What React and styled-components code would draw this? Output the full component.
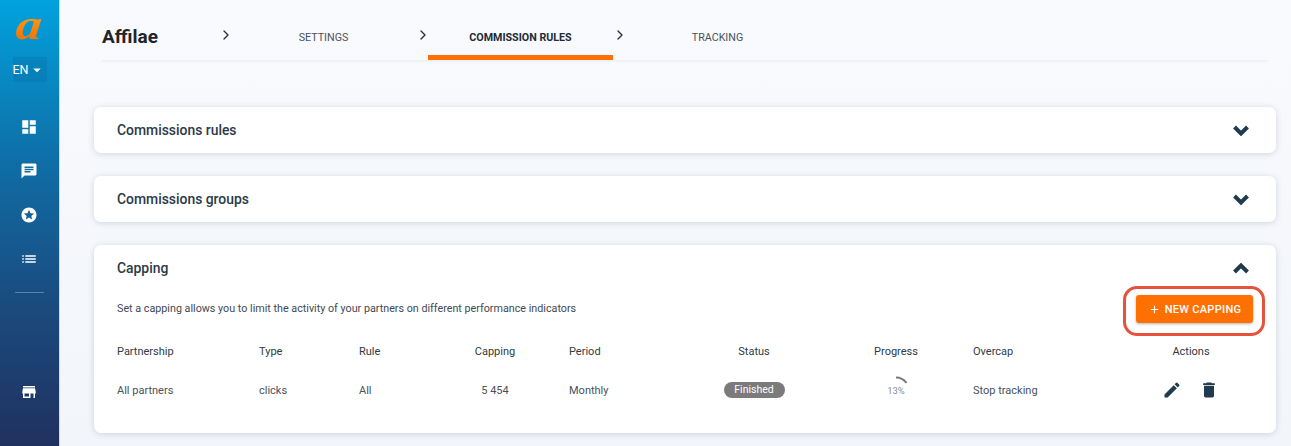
import React from "react";
import styled, { createGlobalStyle } from "styled-components";
import { MdDashboard, MdChat, MdStars, MdStore, MdEdit, MdDelete, MdAdd, MdArrowDropDown, MdList } from "react-icons/md";
import { ChevronRight } from "lucide-react";

const Global = createGlobalStyle`
  html, body { margin: 0; padding: 0; height: 100%; }
  body { font-family: Roboto, "Liberation Sans", sans-serif; background: #f5f7fc; overflow: hidden; }
  * { box-sizing: border-box; }
`;
const Page = styled.div`display: flex; width: 1291px; height: 446px; overflow: hidden; background: linear-gradient(180deg, #f9fafd 0%, #f2f5fa 100%);`;
const Sidebar = styled.aside`
  flex: 0 0 60px; height: 446px; display: flex; flex-direction: column; align-items: center;
  background: linear-gradient(180deg, #01a2de 0%, #0f6ea6 36%, #1a4b7f 68%, #20315f 100%);
  border-right: 1px solid #c8dcea; padding: 10px 1px 0 0; color: #fff;
`;
const Logo = styled.div`
  height: 32px; width: 40px; text-align: center; font: italic bold 43px/30px "Liberation Serif", serif;
  background: linear-gradient(180deg, #ffa31a, #f07000); -webkit-background-clip: text; background-clip: text; color: transparent;
  transform: scaleX(1.2) skewX(-5deg);
`;
const Lang = styled.div`
  margin: 15px 0 0 1px; width: 34px; height: 25px; display: flex; align-items: center;
  background: rgba(0,60,110,.12); font-size: 12.5px; white-space: nowrap;
  svg { margin-left: -1px; flex: none; }
`;
const SideIcons = styled.nav`display: flex; flex-direction: column; align-items: center; gap: 26px; margin-top: 36px;`;
const Divider = styled.div`width: 29px; height: 1px; background: rgba(255,255,255,.3); margin-top: 24px;`;
const StoreSlot = styled.div`margin-top: 90px; line-height: 0;`;
const Main = styled.main`flex: 1; min-width: 0; padding: 0 15px 0 34px;`;
const Header = styled.header`
  margin: 0 8px; height: 62px; display: flex; align-items: flex-start; border-bottom: 2px solid #eff2f6;
`;
const Brand = styled.div`flex: 0 0 117px; font-size: 19px; font-weight: 700; color: #212529; padding-top: 27px; line-height: 20px;`;
const Arrow = styled.div`flex: 0 0 12px; min-width: 0; display: flex; justify-content: center; padding: 27px 0 0 1px; color: #2b2f36; svg { flex: none; }`;
const Tab = styled.div`
  flex: 0 0 185px; height: 60px; text-align: center; padding-top: 31px; line-height: 14px; font-size: 10.7px;
  font-weight: ${p => p.$active ? 700 : 400}; color: ${p => p.$active ? "#212b36" : "#4a525e"};
  border-bottom: 5px solid ${p => p.$active ? "#ff7105" : "transparent"};
`;
const Stack = styled.div`display: flex; flex-direction: column; gap: 23px; margin-top: 45px;`;
const Card = styled.section`background: #fff; border-radius: 7px; box-shadow: 0 1px 6px rgba(60,75,100,.2); padding-bottom: ${p => p.$open ? 19 : 0}px;`;
const CardHead = styled.div`
  height: 46px; display: flex; align-items: center; justify-content: space-between; padding: 0 27px 0 23px;
  font-size: 13.9px; font-weight: 500; color: #2c3a47;
`;
const Chevron = styled.svg`width: 16px; height: 11px; fill: none; stroke: #1f3b4d; stroke-width: 4; transform: ${p => p.$up ? "scaleY(-1)" : "none"};`;
const Intro = styled.div`
  display: flex; align-items: center; justify-content: space-between; padding: 0 11px 0 23px; height: 50px; margin-top: -5px;
  font-size: 10.75px; color: #3f4a55;
`;
const IntroText = styled.span`margin-top: -6px;`;
const Callout = styled.div`
  border: 3px solid #e5533d; border-radius: 14px; padding: 6px 9px 10px 10px; background: #fff; line-height: 0;
`;
const Button = styled.button`
  width: 117px; height: 28px; border: 0; border-radius: 3px; background: #ff7002; color: #fff; font: 500 11px Roboto, sans-serif;
  letter-spacing: .3px; display: flex; align-items: center; justify-content: center; gap: 4px; box-shadow: 0 1px 3px rgba(0,0,0,.3);
`;
const Row = styled.div`
  display: grid; grid-template-columns: 142px 100px 82px 108px 140px 130px 154px 158px 120px; padding-left: 23px; align-items: center;
  height: ${p => p.$h}px; font-size: 11px; color: ${p => p.$head ? "#2f3a45" : "#48525c"};
`;
const Cell = styled.div`text-align: ${p => p.$center ? "center" : "left"}; padding-left: ${p => p.$inset || 0}px;`;
const Badge = styled.span`
  display: inline-block; width: 61px; height: 16px; line-height: 16px; border-radius: 8px; background: #7b7b7b; color: #fff; font-size: 10.5px; text-align: center; vertical-align: middle;
`;
const Gauge = styled.div`display: flex; flex-direction: column; align-items: center; font-size: 9.5px; color: #8a8f96; line-height: 10px; margin-top: -8px;`;
const GaugeArc = styled.svg`width: 22px; height: 10px; fill: none; stroke: #7b7b7b; stroke-width: 2;`;
const Actions = styled.div`display: flex; justify-content: center; gap: 17px; color: #1f3b4d; line-height: 0; margin-left: -1px;`;

const Down = ({ up }) => (
  <Chevron $up={up} viewBox="0 0 16 11"><path d="M1.5 2 L8 8.5 L14.5 2" /></Chevron>
);

export default function App() {
  return (
    <Page>
      <Global />
      <Sidebar>
        <Logo>a</Logo>
        <Lang>EN<MdArrowDropDown size={18} /></Lang>
        <SideIcons>
          <MdDashboard size={18} />
          <MdChat size={18} />
          <MdStars size={18} />
          <MdList size={18} />
        </SideIcons>
        <Divider />
        <StoreSlot><MdStore size={18} /></StoreSlot>
      </Sidebar>
      <Main>
        <Header>
          <Brand>Affilae</Brand>
          <Arrow><ChevronRight size={16} strokeWidth={2} /></Arrow>
          <Tab>SETTINGS</Tab>
          <Arrow><ChevronRight size={16} strokeWidth={2} /></Arrow>
          <Tab $active>COMMISSION RULES</Tab>
          <Arrow><ChevronRight size={16} strokeWidth={2} /></Arrow>
          <Tab>TRACKING</Tab>
        </Header>
        <Stack>
          <Card><CardHead>Commissions rules<Down /></CardHead></Card>
          <Card><CardHead>Commissions groups<Down /></CardHead></Card>
          <Card $open>
            <CardHead>Capping<Down up /></CardHead>
            <Intro>
              <IntroText>Set a capping allows you to limit the activity of your partners on different performance indicators</IntroText>
              <Callout><Button><MdAdd size={13} />NEW CAPPING</Button></Callout>
            </Intro>
            <Row $head $h={30}>
              <Cell>Partnership</Cell><Cell>Type</Cell><Cell>Rule</Cell><Cell $center>Capping</Cell>
              <Cell $inset={20}>Period</Cell><Cell $center>Status</Cell><Cell $center>Progress</Cell><Cell>Overcap</Cell><Cell $center>Actions</Cell>
            </Row>
            <Row $h={48}>
              <Cell>All partners</Cell><Cell>clicks</Cell><Cell>All</Cell><Cell $center>5 454</Cell>
              <Cell $inset={20}>Monthly</Cell>
              <Cell $center><Badge>Finished</Badge></Cell>
              <Cell $center>
                <Gauge>
                  <GaugeArc viewBox="0 0 22 10"><path d="M11 1.5 A 13 13 0 0 1 21.5 7" /></GaugeArc>
                  13%
                </Gauge>
              </Cell>
              <Cell>Stop tracking</Cell>
              <Cell><Actions><MdEdit size={20} /><MdDelete size={20} /></Actions></Cell>
            </Row>
          </Card>
        </Stack>
      </Main>
    </Page>
  );
}
